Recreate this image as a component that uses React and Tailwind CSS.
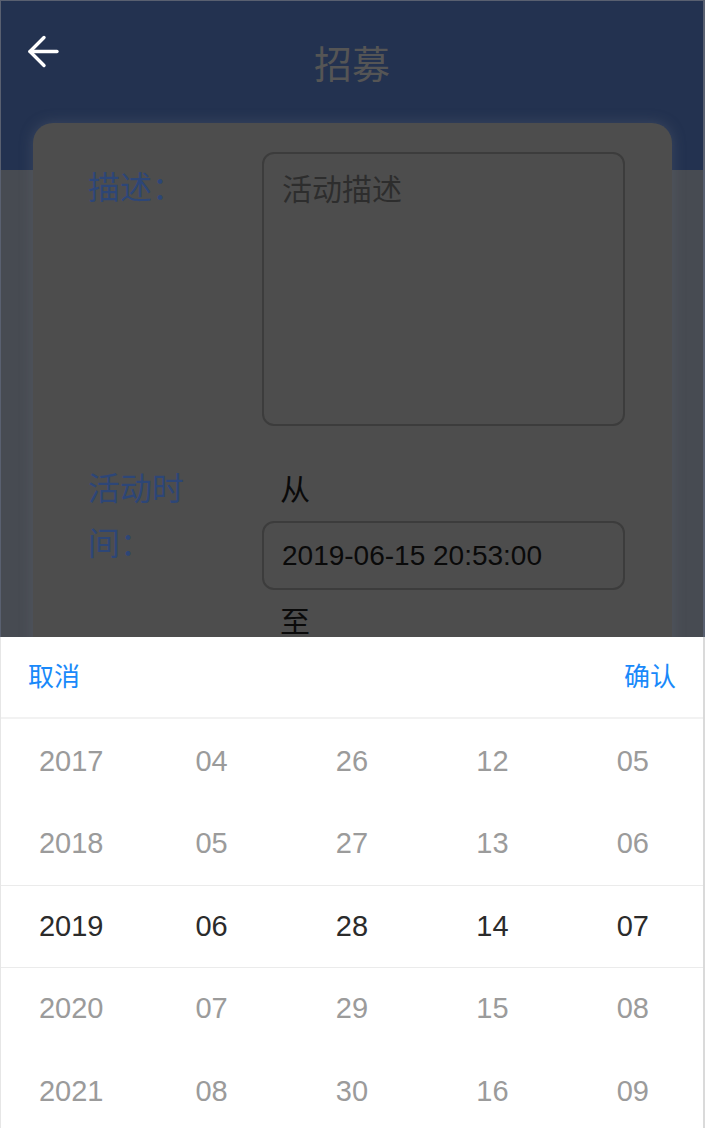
import React from "react";

const rows = [
  ["2017", "04", "26", "12", "05"],
  ["2018", "05", "27", "13", "06"],
  ["2019", "06", "28", "14", "07"],
  ["2020", "07", "29", "15", "08"],
  ["2021", "08", "30", "16", "09"],
];

function BackArrow() {
  return (
    <svg width="32" height="33" viewBox="0 0 32 33" fill="none" stroke="#ffffff" strokeWidth="3.4" strokeLinecap="round" strokeLinejoin="round">
      <path d="M3 16.5H30" />
      <path d="M17 2.5L3 16.5L17 30.5" />
    </svg>
  );
}

export default function App() {
  return (
    <div className="relative h-[1128px] w-full border-t border-l border-r-2 border-[#596070] font-[Liberation_Sans,Noto_Sans_CJK_SC,sans-serif]">
      <div className="h-full overflow-hidden bg-[#474b52]">
        <header className="grid h-[169px] grid-cols-[1fr_auto_1fr] items-start bg-[#233250] pt-[34px]">
          <div className="pl-[26px]">
            <BackArrow />
          </div>
          <div className="text-[38px] leading-[54px] text-[#555555] font-['Noto_Sans_CJK_SC',sans-serif]">招募</div>
          <div />
        </header>

        <div className="relative -mt-[47px] ml-[32px] mr-[31px] h-[640px] rounded-[20px] bg-[#4d4d4d] pt-[29px] pl-[55px] pr-[47px] shadow-[0_0_14px_rgba(110,115,125,0.35)]">
          <div className="flex">
            <div className="mt-[9px] mr-[70px] w-[104px] shrink-0 text-[32px] leading-[55px] text-[#2d4677]">描述：</div>
            <div className="h-[274px] flex-1 rounded-[12px] border-2 border-[#3c3c3c] px-[18px] pt-[16px] text-[30px] leading-[40px] text-[#2d2d2d]">
              活动描述
            </div>
          </div>

          <div className="mt-[36px] flex">
            <div className="mr-[70px] w-[104px] shrink-0 text-[32px] leading-[55px] text-[#2d4677]">活动时间：</div>
            <div className="flex-1">
              <div className="pl-[18px] text-[30px] leading-[55px] text-[#0a0a0a]">从</div>
              <div className="mt-[4px] flex h-[69px] items-center rounded-[12px] border-2 border-[#3c3c3c] px-[18px] text-[28px] text-[#0a0a0a]">
                2019-06-15 20:53:00
              </div>
              <div className="mt-[4px] pl-[18px] text-[30px] leading-[55px] text-[#0a0a0a]">至</div>
            </div>
          </div>
        </div>
      </div>

      <div className="absolute -left-px -right-[2px] bottom-0 h-[491px] border-l border-r-2 border-l-[#e6e6e6] border-r-[#dadada] bg-white">
        <div className="flex h-[82px] items-center justify-between border-b-2 border-[#f2f2f2] pl-[27px] pr-[27px] text-[26px] text-[#1989fa]">
          <span>取消</span>
          <span>确认</span>
        </div>
        <div className="pt-px">
          {rows.map((row, i) => (
            <div
              key={i}
              className={
                i === 2
                  ? "grid h-[82.5px] grid-cols-5 items-center border-y border-[#ebebeb] text-[29px] text-[#2b2b2b]"
                  : "grid h-[82.5px] grid-cols-5 items-center text-[29px] text-[#9b9b9b]"
              }
            >
              {row.map((v, j) => (
                <div key={j} className="text-center">
                  {v}
                </div>
              ))}
            </div>
          ))}
        </div>
      </div>
    </div>
  );
}
